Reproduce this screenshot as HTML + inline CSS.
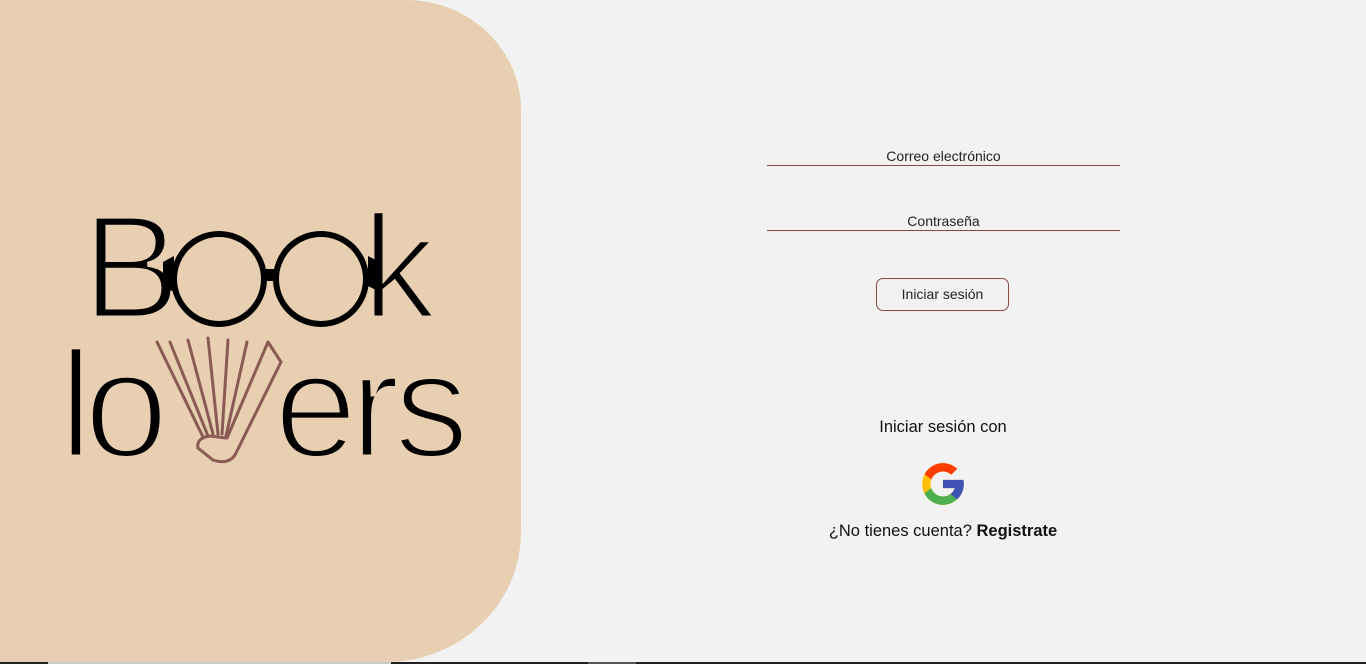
<!DOCTYPE html>
<html><head><meta charset="utf-8"><style>
*{margin:0;padding:0;box-sizing:border-box}
body{width:1366px;height:664px;background:#f2f2f2;position:relative;overflow:hidden;font-family:"Liberation Sans",sans-serif;color:#222}
.panel{position:absolute;left:0;top:0;width:521px;height:662px;background:#e8cfb1;border-top-right-radius:115px 110px;border-bottom-right-radius:135px 130px}
.line{position:absolute;left:767px;width:353px;height:1px;background:#8b4a45}
.lbl{position:absolute;left:767px;width:353px;text-align:center;font-size:14px;color:#222}
.btn{position:absolute;left:876px;top:278px;width:133px;height:33px;border:1px solid #8b4a45;border-radius:7px;font-size:14px;text-align:center;line-height:31px;color:#222}
.t{position:absolute;left:700px;width:486px;text-align:center;font-size:16.5px;color:#111}
.bar{position:absolute;left:0;top:662px;width:1366px;height:2px;background:#222}
</style></head><body>
<div class="panel"></div>
<svg style="position:absolute;left:0;top:0" width="521" height="662">
<g font-family="Liberation Sans, sans-serif" fill="#000" stroke="#e8cfb1" stroke-width="5">
<text x="82" y="318" font-size="148">B</text>
<text x="362" y="318" font-size="148" textLength="74" lengthAdjust="spacingAndGlyphs">k</text>
<text x="59" y="457" font-size="152">l</text>
<text x="84" y="457" font-size="152">o</text>
<text x="274" y="457" font-size="150">e</text>
<text x="350" y="457" font-size="150">r</text>
<text x="394" y="457" font-size="150">s</text>
</g>
<g fill="none" stroke="#000" stroke-width="6">
<circle cx="219" cy="279" r="45"/>
<circle cx="321" cy="279" r="45"/>
</g>
<path d="M163 262 L174 256 L174 292 L163 286Z M264 269 L276 269 L276 281 L264 281Z M368 256 L376 260 L376 290 L368 286Z" fill="#000"/>
<g stroke="#8a5a55" stroke-width="3" fill="none" stroke-linecap="round">
<path d="M157 342 L203 437"/>
<path d="M170 342 L208 436"/>
<path d="M188 340 L213 434"/>
<path d="M208 338 L218 434"/>
<path d="M228 340 L222 434"/>
<path d="M247 342 L226 436"/>
<path d="M268 342 L281 362 L235 455 Q228 465 213 460 L198 448 Q196 438 210 436 L226 438"/>
<path d="M268 342 L227 438"/>
</g>
</svg>
<div class="lbl" style="top:148px">Correo electrónico</div>
<div class="line" style="top:165px"></div>
<div class="lbl" style="top:213px">Contraseña</div>
<div class="line" style="top:230px"></div>
<div class="btn">Iniciar sesión</div>
<div class="t" style="top:418px">Iniciar sesión con</div>
<svg style="position:absolute;left:918px;top:459px" width="50" height="50" viewBox="0 0 48 48">
<path fill="#FFC107" d="M43.6 20H24v8h11.3C33.7 32.7 29.2 36 24 36c-6.6 0-12-5.4-12-12s5.4-12 12-12c3.1 0 5.8 1.2 7.9 3.1l5.7-5.7C34 6.1 29.3 4 24 4 13 4 4 13 4 24s9 20 20 20 20-9 20-20c0-1.3-.1-2.7-.4-4z"/>
<path fill="#FF3D00" d="M6.3 14.7l6.6 4.8C14.7 15.1 19 12 24 12c3.1 0 5.8 1.2 7.9 3.1l5.7-5.7C34 6.1 29.3 4 24 4 16.3 4 9.7 8.3 6.3 14.7z"/>
<path fill="#4CAF50" d="M24 44c5.2 0 9.9-2 13.4-5.2l-6.2-5.2C29.2 35.1 26.7 36 24 36c-5.2 0-9.6-3.3-11.3-8l-6.5 5C9.5 39.6 16.2 44 24 44z"/>
<path fill="#3F51B5" d="M43.6 20H24v8h11.3c-.8 2.2-2.2 4.2-4.1 5.6l6.2 5.2C37 39.2 44 34 44 24c0-1.3-.1-2.7-.4-4z"/>
</svg>
<div class="t" style="top:522px">¿No tienes cuenta? <b>Registrate</b></div>
<div class="bar"></div>
<div style="position:absolute;left:48px;top:662px;width:343px;height:2px;background:#ccc"></div>
<div style="position:absolute;left:588px;top:662px;width:48px;height:2px;background:#555"></div>
</body></html>
